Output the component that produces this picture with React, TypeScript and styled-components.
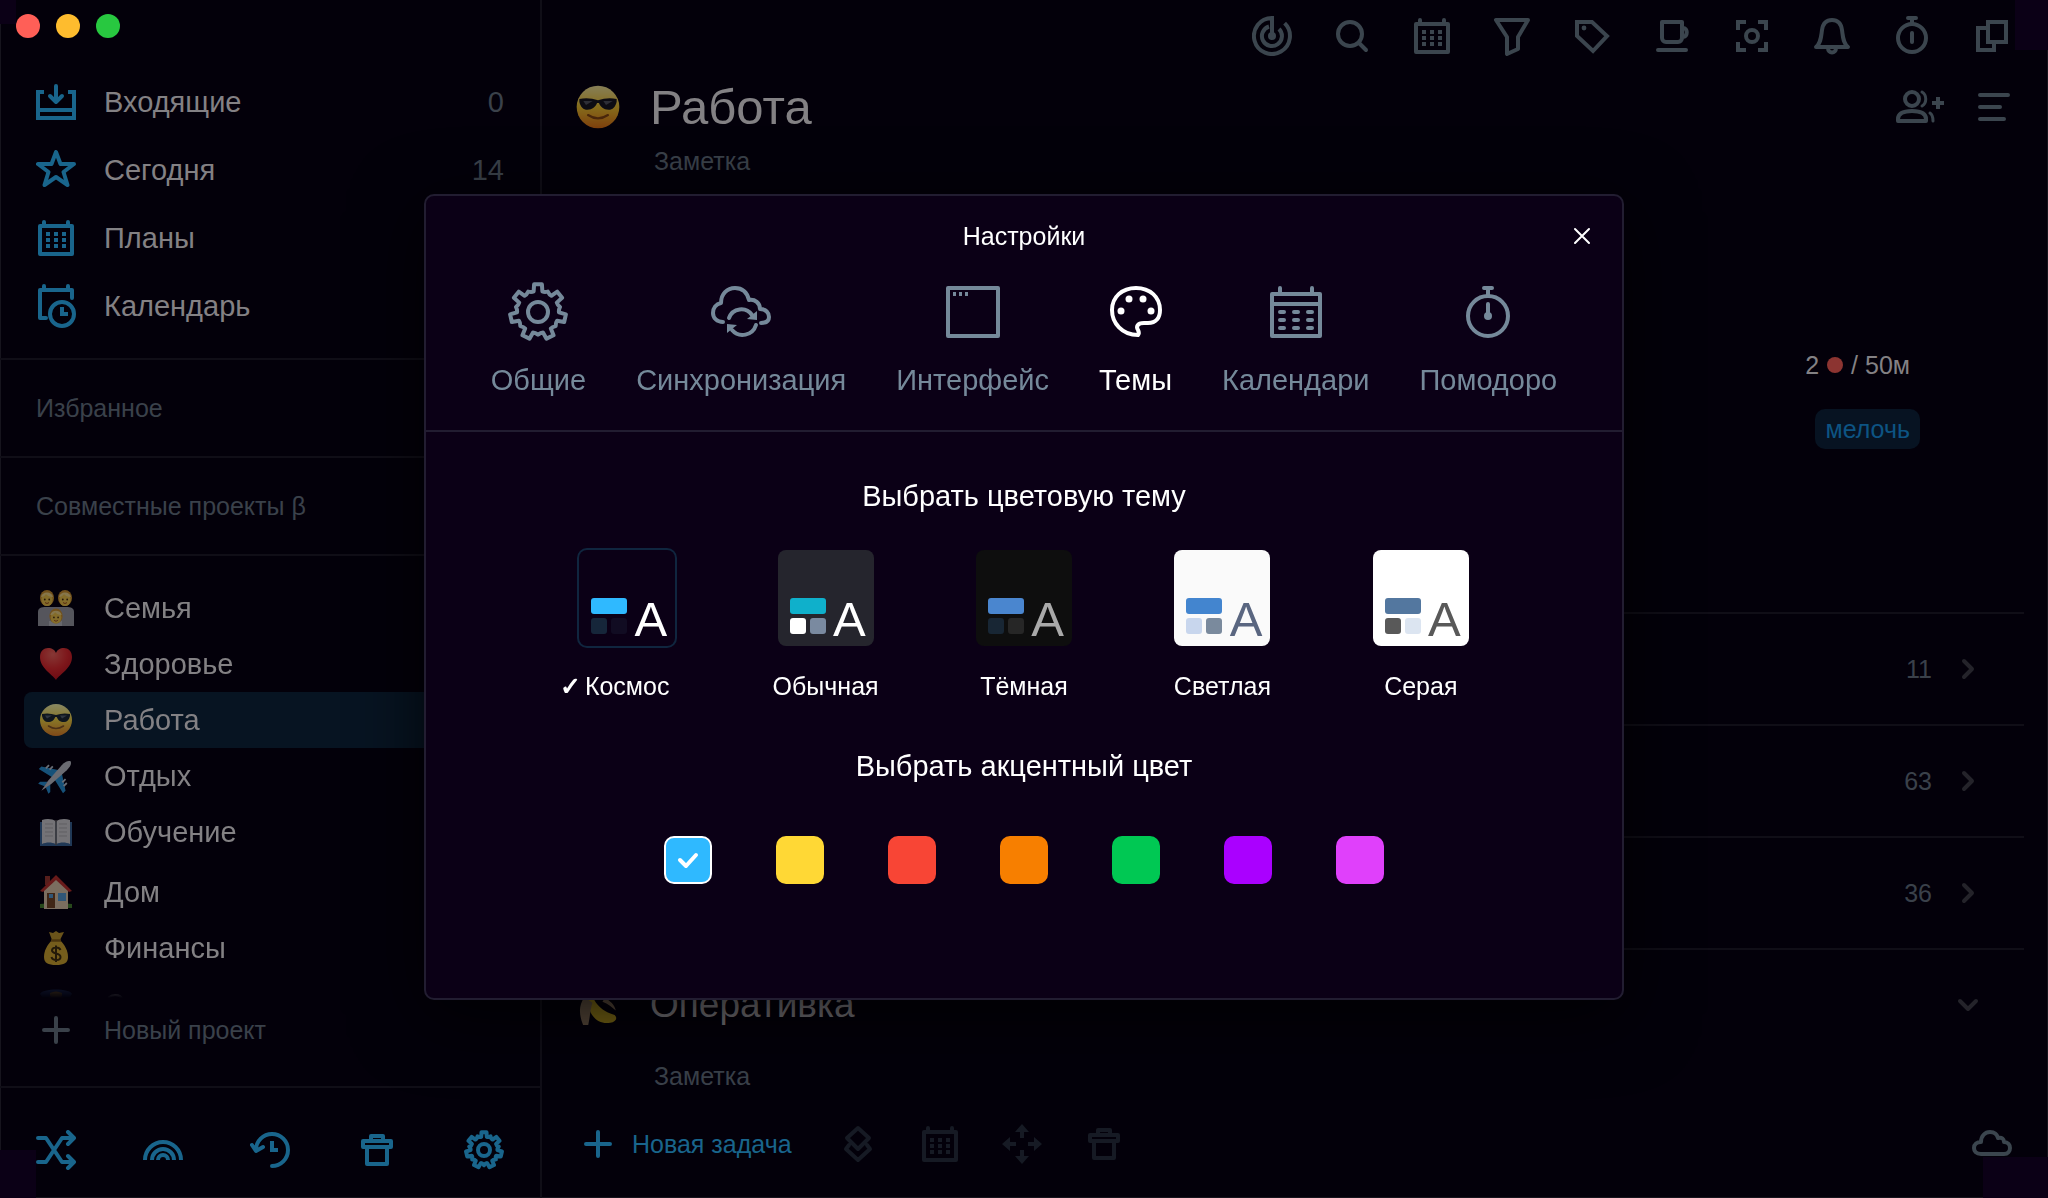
import React, { useState } from "react";
import styled, { createGlobalStyle } from "styled-components";

const color = {
  desktop: "#0b0016",
  page: "#03000a",
  modal: "#0b0016",
  edge: "#16141d",
  rule: "#100e17",
  text: "#838184",
  muted: "#3a414a",
  icon: "#3b454e",
  faint: "#161a24",
  accentDim: "#19658c",
  tab: "#75899a",
  modalRule: "#221d31",
};

const GlobalStyle = createGlobalStyle`
  *, *::before, *::after { box-sizing: border-box; }
  body {
    margin: 0;
    background: ${color.desktop};
    font-family: "Liberation Sans", Arial, sans-serif;
    font-size: 25px;
    line-height: 32px;
    color: ${color.text};
  }
  button { font: inherit; color: inherit; background: none; border: 0; padding: 0; cursor: pointer; }
  h1, h2, h3, p, ul { margin: 0; padding: 0; font-weight: 400; list-style: none; }
  svg { display: block; flex: none; }
`;

/* ---------- icons ---------- */

type IconProps = { size?: number };

const StrokeSvg = styled.svg`
  fill: none;
  stroke: currentColor;
  stroke-width: 4;
  stroke-linecap: round;
  stroke-linejoin: round;
  .solid { fill: currentColor; stroke: none; }
  .square { stroke-linecap: butt; stroke-linejoin: miter; }
  .thin { stroke-width: 3; }
  .hair { stroke-width: 2; }
`;

const Icon = ({ size = 40, children, box = "0 0 40 40", width }: any) => (
  <StrokeSvg width={width ?? size} height={size} viewBox={box} aria-hidden="true">
    {children}
  </StrokeSvg>
);

const gearPath = (c: number, outer: number, inner: number, teeth = 7) => {
  const step = 360 / teeth;
  const at = (r: number, deg: number) => {
    const a = ((deg - 90) * Math.PI) / 180;
    return `${(c + r * Math.cos(a)).toFixed(2)} ${(c + r * Math.sin(a)).toFixed(2)}`;
  };
  let d = "";
  for (let i = 0; i < teeth; i++) {
    const m = i * step;
    d += `${i ? "L" : "M"}${at(inner, m - 12)}L${at(outer, m - 8)}L${at(outer, m + 8)}L${at(inner, m + 12)}`;
    d += `Q${at(inner - 0.4, m + 18)} ${at(inner + 1.6, m + step / 2)}`;
    d += `Q${at(inner - 0.4, m + step - 18)} ${at(inner, m + step - 12)}`;
  }
  return d + "Z";
};

const InboxIcon = () => (
  <Icon><path className="square" d="M8 10H2V36H38V10H32M2 28H38" /><path d="M20 4V20M14 14L20 20L26 14" /></Icon>
);
const StarIcon = () => (
  <Icon><path d="M20 2L24.5 14H38L27.5 22L31.5 35L20 27L8.5 35L12.5 22L2 14H15.5Z" /></Icon>
);
const CalendarIcon = () => (
  <Icon>
    <path d="M4 8H36V36H4ZM8 4V8M32 4V8" />
    {[14, 20, 26].map((y) => [10, 18, 26].map((x) => <rect key={`${x}-${y}`} className="solid" x={x} y={y} width="4" height="4" />))}
  </Icon>
);
const CalendarClockIcon = () => (
  <Icon size={44} width={40} box="0 -2 40 44">
    <path d="M10 32H4V4H36V12M8 0V4M32 0V4" /><circle cx="26" cy="28" r="12" /><path className="square" d="M26 21V28H32" />
  </Icon>
);
const ShuffleIcon = () => (
  <Icon><path d="M2 8H10L26 32H37M2 32H10L26 8H37M32 2L38 8L32 14M32 26L38 32L32 38" /></Icon>
);
const RainbowIcon = () => (
  <Icon>
    <path className="square" d="M2 30A18 18 0 0 1 38 30M9 30A11 11 0 0 1 31 30" />
    <path className="square" d="M15 30A5 5 0 0 1 25 30" />
  </Icon>
);
const HistoryIcon = () => (
  <Icon><path d="M22 36A16 16 0 1 0 6 20M2 15L6 21L13 17" /><path className="square" d="M22 11V20H28" /></Icon>
);
const TrashIcon = () => (
  <Icon><path d="M6 11H34V17H6ZM10 17V34H30V17M14 11V6H26V11" /></Icon>
);
const GearIcon = () => (
  <Icon><path d={gearPath(20, 18, 13.5)} /><circle cx="20" cy="20" r="6" /></Icon>
);
const PlusIcon = () => <Icon><path d="M20 8V32M8 20H32" /></Icon>;
const RadarIcon = () => (
  <Icon>
    <path className="square" d="M20 20V2A18 18 0 1 0 32.6 7.2M17 10.5A10 10 0 1 0 27 13" /><circle className="solid" cx="20" cy="20" r="4" />
  </Icon>
);
const SearchIcon = () => <Icon><circle cx="18" cy="18" r="12" /><path d="M27 27L34 34" /></Icon>;
const FilterIcon = () => <Icon><path d="M4 4H36L26 21V33L15 38V21Z" /></Icon>;
const TagIcon = () => (
  <Icon><path className="square" d="M5 6H20L35 20L21 35L5 20Z" /><circle className="solid" cx="12" cy="12" r="2.4" /></Icon>
);
const CupIcon = () => (
  <Icon><path d="M10 6H30V22A4 4 0 0 1 26 26H14A4 4 0 0 1 10 22ZM31 12C36 12 36 20 31 21M6 34H34" /></Icon>
);
const FocusIcon = () => (
  <Icon><path className="square" d="M6 14V6H14M26 6H34V14M34 26V34H26M14 34H6V26" /><circle cx="20" cy="20" r="6" /></Icon>
);
const BellIcon = () => (
  <Icon><path d="M4 31C9 27 9 21 10 14C11 7 15 4 20 4C25 4 29 7 30 14C31 21 31 27 36 31ZM16 32C16 38 24 38 24 32" /></Icon>
);
const TimerIcon = () => (
  <Icon><circle cx="20" cy="22" r="14" /><path d="M16 2H24M20 2V8" /><path d="M20 17V26" /></Icon>
);
const CopyIcon = () => (
  <Icon><path className="square" d="M16 6H34V26H16ZM16 12H6V34H22V26" /></Icon>
);
const AddPeopleIcon = () => (
  <Icon width={48} box="0 0 48 40">
    <circle cx="16" cy="12" r="7" />
    <path d="M2 34V32C2 26 8 24 16 24S30 26 30 32V34Z" />
    <path className="thin" d="M26 5C31 8 31 16 26 19M34 26C37 28 37 31 37 34" />
    <path className="square" d="M42 10V22M36 16H48" />
  </Icon>
);
const MenuIcon = () => <Icon><path d="M8 8H36M8 20H28M8 32H32" /></Icon>;
const CloudIcon = () => (
  <Icon><path d="M9 30C4 30 2 27 2 24C2 20 5 18 9 18C9 12 13 8 18 8C22 8 25 10 26 14C30 13 32 15 32 18C36 18 38 21 38 24C38 27 36 30 32 30Z" /></Icon>
);
const LayersIcon = () => (
  <Icon><path d="M20 4L31 14L20 25L9 14ZM11 21L8 25L20 36L32 25L29 21" /></Icon>
);
const MoveIcon = () => (
  <Icon>
    {[0, 90, 180, 270].map((a) => (
      <path key={a} className="solid" transform={`rotate(${a} 20 20)`} d="M20 0L27 8H22V14H18V8H13Z" />
    ))}
  </Icon>
);
const ChevronIcon = ({ down }: { down?: boolean }) => (
  <Icon size={32} box="0 0 32 32"><path d={down ? "M8 12L16 20L24 12" : "M12 8L20 16L12 24"} /></Icon>
);
const CloseIcon = () => <Icon size={24} box="0 0 24 24"><path className="hair" d="M5 5L19 19M19 5L5 19" /></Icon>;

const BigIcon = ({ children }: any) => <Icon size={60} box="0 0 60 60">{children}</Icon>;
const BigGear = () => <BigIcon><path d={gearPath(30, 28, 21)} /><circle cx="30" cy="30" r="10" /></BigIcon>;
const BigSync = () => (
  <BigIcon>
    <path d="M12 40C6 40 2 36 2 31C2 26 5 22 10 21C10 12 16 6 24 6C31 6 36 10 38 18C44 17 49 21 49 27C55 27 58 31 58 35C58 39 55 41 50 41" />
    <path d="M18 36A13 13 0 0 1 41 33M45 43A14 14 0 0 1 21 48" />
    <path className="solid" d="M46 29V38L36 37ZM16 51V42L26 43Z" />
  </BigIcon>
);
const BigWindow = () => (
  <BigIcon><path d="M5 6H55V54H5Z" /><path className="solid" d="M10 10h3v4h-3zM16 10h3v4h-3zM22 10h3v4h-3z" /></BigIcon>
);
const BigPalette = () => (
  <BigIcon>
    <path d="M32 53C16 53 6 41 6 28C6 15 16 6 30 6C44 6 54 15 54 28C54 36 50 41 42 41H38C31 41 30 45 32 48C33 50 33 52 32 53Z" />
    <g className="solid"><circle cx="23" cy="17" r="3.5" /><circle cx="37" cy="17" r="3.5" /><circle cx="15" cy="29" r="3.5" /><circle cx="45" cy="29" r="3.5" /></g>
  </BigIcon>
);
const BigCalendar = () => (
  <BigIcon>
    <path d="M6 12H54V54H6ZM6 22H54M14 6V12M46 6V12" />
    {[28, 36, 44].map((y) => [12, 26, 40].map((x) => <rect key={`${x}-${y}`} className="solid" x={x} y={y} width="8" height="4" rx="2" />))}
  </BigIcon>
);
const BigTimer = () => (
  <BigIcon><circle cx="30" cy="34" r="20" /><path d="M26 6H34M30 6V13M30 22V34" /><circle className="solid" cx="30" cy="34" r="4" /></BigIcon>
);

/* ---------- project pictures ---------- */

const Picture = styled.svg`opacity: 0.52;`;
const Emoji = ({ size = 36, children }: any) => (
  <Picture width={size} height={size} viewBox="0 0 36 36" aria-hidden="true">{children}</Picture>
);
const Head = ({ x, y, s = 1 }: { x: number; y: number; s?: number }) => (
  <g transform={`translate(${x} ${y}) scale(${s})`}>
    <ellipse cx="0" cy="0" rx="7" ry="8" fill="#d99a2b" />
    <ellipse cx="0" cy="1.6" rx="5.6" ry="6.4" fill="#fbd04a" />
    <path d="M-6-1C-5-7 5-7 6-1C2-1 0-3-1-4C-2-2-4-1-6-1Z" fill="#ffe38a" />
    <circle cx="-2.2" cy="1.5" r=".9" fill="#4a2d0a" /><circle cx="2.2" cy="1.5" r=".9" fill="#4a2d0a" />
    <path d="M-2 4.6Q0 6.4 2 4.6" fill="none" stroke="#a5501a" />
  </g>
);
const Family = () => (
  <Emoji>
    <path d="M0 36V22C0 18 3 17 8 17H28C33 17 36 18 36 22V36Z" fill="#a2a4a9" />
    <path d="M11 36V31H24V36Z" fill="#c4c5c9" />
    <Head x={9} y={8} /><Head x={27} y={8} /><Head x={18} y={26} s={0.95} />
  </Emoji>
);
const Heart = () => (
  <Emoji>
    <defs><radialGradient id="heart" cx=".4" cy=".2" r=".9"><stop offset="0" stopColor="#ff6b5e" /><stop offset=".5" stopColor="#ef2d2d" /><stop offset="1" stopColor="#c3101a" /></radialGradient></defs>
    <path fill="url(#heart)" d="M18 34C14 28 2 22 2 11C2 5 6 2 10 2C14 2 17 4 18 7C19 4 22 2 26 2C30 2 34 5 34 11C34 22 22 28 18 34Z" />
  </Emoji>
);
const Cool = ({ size }: IconProps) => (
  <Emoji size={size}>
    <defs><linearGradient id="cool" x2="0" y2="1"><stop offset="0" stopColor="#fff3a0" /><stop offset=".5" stopColor="#fdd02c" /><stop offset="1" stopColor="#ee7a10" /></linearGradient></defs>
    <circle cx="18" cy="18" r="16" fill="url(#cool)" />
    <path d="M4 12Q11 10.500 18 13Q25 10.500 32 12V14C31 18 29 20 26 20C22 20 20 18 18.700 15H17.300C16 18 14 20 10 20C7 20 5 18 4 14Z" fill="#17181c" />
    <path d="M7 13.500H14L9 16.500ZM22 13.500H29L24 16.500Z" fill="#55585f" />
    <path d="M10.500 24Q18 29 25.500 24" fill="none" stroke="#8a4a0c" strokeWidth="1.600" strokeLinecap="round" />
  </Emoji>
);
const Plane = () => (
  <Emoji>
    <g transform="translate(18 18) rotate(45) scale(.9) translate(-18 -18)">
      <path d="M16 11L-1 22V26L16 22ZM20 11L37 22V26L20 22ZM16 29L10 35V38L17 35ZM20 29L26 35V38L19 35Z" fill="#2a9be0" />
      <path d="M4 15v5M8 13v5M28 13v5M32 15v5" stroke="#c9d3dc" strokeWidth="2" />
      <path d="M18-5C21-4 22 0 22 5L20.500 28L18 41L15.500 28L14 5C14 0 15-4 18-5Z" fill="#c9cdd3" />
    </g>
  </Emoji>
);
const Book = () => (
  <Emoji>
    <path d="M2 8H34V32H2Z" fill="#3c6c9e" />
    <path d="M4 6C9 4 15 5 17.500 7V30C14 28 8 28 4 30ZM32 6C27 4 21 5 18.500 7V30C22 28 28 28 32 30Z" fill="#dcdcdc" />
    <path d="M7 10h8M7 14h8M7 18h8M7 22h8M21 10h8M21 14h8M21 18h8M21 22h8" stroke="#b5b5b5" />
    <path d="M18 6V31" stroke="#666" strokeWidth="1.500" />
  </Emoji>
);
const House = () => (
  <Emoji>
    <path d="M7 2H12V11H7Z" fill="#a33a2e" /><path d="M2 30Q18 28 34 30V34H2Z" fill="#4a8a2c" />
    <path d="M6 15L18 3L30 15V35H6Z" fill="#ead3b0" />
    <path d="M2 17L18 1L34 17L31 18L18 6L5 18Z" fill="#c5322b" />
    <path d="M9 19H17V34H9Z" fill="#7a4a24" /><path d="M20 19H28V27H20ZM11 20H15V24H11Z" fill="#5aa5dd" />
  </Emoji>
);
const Money = () => (
  <Emoji>
    <path d="M11 2L15 3L18 1L21 3L26 2L22 10H14Z" fill="#c9a02b" />
    <path d="M14 10H22C27 15 30 21 30 27C30 33 26 35 18 35S6 33 6 27C6 21 9 15 14 10Z" fill="#dfb22f" />
    <path d="M13 10.500H23" stroke="#8c6413" strokeWidth="2.500" />
    <path d="M22.500 20C21 16.500 14 17 14 20.500C14 24.500 22.500 22.500 22.500 27C22.500 31 14.500 31 13.500 27M18 15.500V32" fill="none" stroke="#41300a" strokeWidth="2" />
  </Emoji>
);
const Officer = () => (
  <Emoji>
    <path d="M2 8C4 2 32 2 34 8L30 14H6Z" fill="#2c4d8c" /><path d="M12 7Q18 4 24 7V10H12Z" fill="#d9aa3a" />
    <circle cx="18" cy="20" r="11" fill="#fbd04a" />
  </Emoji>
);
const Banana = () => (
  <Emoji size={40}>
    <path d="M9 3C14 10 15 22 33 27C36 30 34 33 29 34C17 36 9 26 9 14Z" fill="#e8c520" />
    <path d="M6 11C0 18 1 28 5 37H9C11 28 11 22 13 16Z" fill="#a98f6a" />
    <path d="M24 12C29 14 33 18 34 23C31 20 27 17 22 15Z" fill="#a98f6a" />
  </Emoji>
);

/* ---------- window ---------- */

const Window = styled.div`
  position: relative;
  display: grid;
  grid-template-columns: 542px 1fr;
  height: 100vh;
  min-height: 1100px;
  overflow: hidden;
  background: ${color.page};
  box-shadow: inset 1px -1px 0 ${color.edge}, inset -1px 0 0 ${color.edge};
`;

type CornerProps = { $v: "top" | "bottom"; $h: "left" | "right"; $w: number; $t: number };
const Corner = styled.span<CornerProps>`
  position: absolute;
  ${(p) => p.$v}: 0;
  ${(p) => p.$h}: 0;
  width: ${(p) => p.$w}px;
  height: ${(p) => p.$t}px;
  background: ${color.desktop};
`;

const Sidebar = styled.aside`
  display: flex;
  flex-direction: column;
  min-height: 0;
  border-right: 2px solid ${color.rule};
`;
const Lights = styled.div`
  position: relative;
  z-index: 1;
  display: flex;
  gap: 16px;
  padding: 14px 16px 0;
`;
const Light = styled.button<{ $fill: string }>`
  width: 24px;
  height: 24px;
  border-radius: 50%;
  background: ${(p) => p.$fill};
`;
const MainNav = styled.nav`
  padding: 30px 0 18px;
`;
const NavItem = styled.button`
  display: flex;
  align-items: center;
  gap: 28px;
  width: 100%;
  height: 68px;
  padding: 0 36px;
  font-size: 29px;
  text-align: left;
  svg { color: ${color.accentDim}; }
`;
const NavCount = styled.span`
  margin-left: auto;
  color: ${color.muted};
`;
const Section = styled.h2`
  display: flex;
  align-items: center;
  flex: none;
  height: 98px;
  padding: 0 36px;
  border-top: 2px solid ${color.rule};
  font-size: 25px;
  color: ${color.muted};
`;
const Projects = styled.ul`
  flex: 1;
  min-height: 0;
  overflow: hidden;
  padding: 24px 16px 0 24px;
  border-top: 2px solid ${color.rule};
  mask-image: linear-gradient(to bottom, #000 calc(100% - 24px), transparent);
`;
const ProjectGroup = styled.li`
  & + & { margin-top: 4px; }
`;
const Project = styled.button<{ $active?: boolean }>`
  display: flex;
  align-items: center;
  gap: 30px;
  width: 100%;
  height: 56px;
  padding: 0 14px;
  border-radius: 8px;
  font-size: 29px;
  text-align: left;
  background: ${(p) => (p.$active ? "#071422" : "transparent")};
`;
const NewProject = styled.button`
  display: flex;
  align-items: center;
  gap: 28px;
  flex: none;
  height: 88px;
  padding: 0 36px 24px;
  color: ${color.muted};
`;
const SideTools = styled.div`
  display: flex;
  align-items: center;
  justify-content: space-between;
  flex: none;
  height: 112px;
  padding: 14px 36px 0;
  border-top: 2px solid ${color.rule};
  color: ${color.accentDim};
`;

const Main = styled.main`
  display: flex;
  flex-direction: column;
  min-width: 0;
`;
const Toolbar = styled.div`
  display: flex;
  justify-content: flex-end;
  gap: 40px;
  padding: 16px 36px 0;
  color: ${color.icon};
`;
const PageHead = styled.header`
  display: flex;
  align-items: center;
  gap: 28px;
  height: 56px;
  margin-top: 23px;
  padding: 0 36px 0 32px;
`;
const PageTitle = styled.h1`
  flex: 1;
  font-size: 49px;
  line-height: 56px;
`;
const HeadActions = styled.div`
  display: flex;
  gap: 28px;
  color: ${color.icon};
`;
const Note = styled.p<{ $top?: number }>`
  padding: ${(p) => p.$top ?? 0}px 112px 0;
  color: ${color.muted};
`;
const TaskMeta = styled.div`
  display: flex;
  flex-direction: column;
  align-items: flex-end;
  gap: 28px;
  height: 435px;
  padding: 172px 128px 0 0;
`;
const Pomodoros = styled.p`
  display: flex;
  align-items: center;
  gap: 8px;
  padding-right: 10px;
`;
const Dot = styled.i`
  width: 16px;
  height: 16px;
  border-radius: 50%;
  background: #8c3431;
`;
const Tag = styled.span`
  height: 40px;
  padding: 4px 10px;
  border-radius: 10px;
  background: #071322;
  color: #0d5483;
`;
const GroupRow = styled.section`
  display: flex;
  align-items: center;
  justify-content: flex-end;
  gap: 20px;
  height: 112px;
  margin: 0 24px 0 36px;
  padding-right: 40px;
  border-top: 2px solid ${color.rule};
  color: ${color.muted};
`;
const GroupTitle = styled.h3`
  display: flex;
  align-items: center;
  gap: 32px;
  flex: 1;
  font-size: 37px;
  line-height: 40px;
  color: #77757a;
`;
const GroupButton = styled.button`
  color: #24232a;
`;
const TaskBar = styled.footer`
  display: flex;
  align-items: center;
  gap: 42px;
  margin-top: auto;
  padding: 0 36px 34px;
  color: ${color.faint};
`;
const NewTask = styled.button`
  display: flex;
  align-items: center;
  gap: 14px;
  padding-right: 4px;
  color: ${color.accentDim};
`;
const SyncButton = styled.button`
  margin-left: auto;
  color: ${color.icon};
`;

/* ---------- settings dialog ---------- */

const Backdrop = styled.div`
  position: fixed;
  inset: 0;
  display: flex;
  align-items: center;
  justify-content: center;
  padding-bottom: 4px;
`;
const Dialog = styled.div`
  position: relative;
  width: 1200px;
  max-width: 100%;
  padding-bottom: 114px;
  border: 2px solid ${color.modalRule};
  border-radius: 10px;
  background: ${color.modal};
  box-shadow: 0 16px 70px rgba(0, 0, 0, 0.75);
  color: #fff;
  text-align: center;
`;
const DialogHead = styled.header`
  display: grid;
  grid-template-columns: 1fr auto 1fr;
  align-items: center;
  height: 80px;
  padding: 0 28px;
`;
const DialogTitle = styled.h2`
  grid-column: 2;
  font-size: 25px;
`;
const CloseButton = styled.button`
  justify-self: end;
`;
const Tabs = styled.div`
  display: flex;
  justify-content: center;
  gap: 50px;
  height: 156px;
  padding-top: 6px;
  border-bottom: 2px solid ${color.modalRule};
`;
const Tab = styled.button<{ $active: boolean }>`
  display: flex;
  flex-direction: column;
  align-items: center;
  gap: 22px;
  align-self: flex-start;
  font-size: 29px;
  color: ${(p) => (p.$active ? "#fff" : color.tab)};
`;
const Choice = styled.fieldset`
  margin: 0;
  padding: 0;
  border: 0;
`;
const ChoiceTitle = styled.legend`
  width: 100%;
  padding: 48px 0 0;
  font-size: 29px;
`;
const HiddenRadio = styled.input`
  position: absolute;
  inset: 0;
  width: 100%;
  height: 100%;
  margin: 0;
  opacity: 0;
  cursor: pointer;
`;
const Themes = styled.div`
  display: grid;
  grid-template-columns: repeat(5, 1fr);
  max-width: 992px;
  margin: 0 auto;
  padding-top: 38px;
`;
const ThemeOption = styled.label`
  position: relative;
  display: flex;
  flex-direction: column;
  align-items: center;
  gap: 24px;
`;
const Preview = styled.span<{ $bg: string; $ink: string; $active: boolean }>`
  display: flex;
  align-items: flex-end;
  justify-content: space-between;
  width: 96px;
  height: 96px;
  padding: 0 8px 10px 12px;
  border-radius: 8px;
  background: ${(p) => p.$bg};
  box-shadow: ${(p) => (p.$active ? "0 0 0 2px #10263f" : "none")};
  color: ${(p) => p.$ink};
  font-size: 49px;
  line-height: 34px;
`;
const Blocks = styled.span`
  display: grid;
  grid-template-columns: 16px 16px;
  grid-template-rows: 16px 16px;
  gap: 4px;
  margin-bottom: 2px;
`;
const Block = styled.i<{ $fill: string; $wide?: boolean }>`
  grid-column: ${(p) => (p.$wide ? "span 2" : "auto")};
  border-radius: 3px;
  background: ${(p) => p.$fill};
`;
const ThemeName = styled.span`
  position: relative;
`;
const Mark = styled.span`
  position: absolute;
  right: 100%;
  padding-right: 4px;
  font-weight: 700;
`;
const Accents = styled.div`
  display: flex;
  justify-content: center;
  gap: 64px;
  padding-top: 54px;
`;
const Swatch = styled.label<{ $fill: string; $active: boolean }>`
  position: relative;
  display: grid;
  place-items: center;
  width: 48px;
  height: 48px;
  border: ${(p) => (p.$active ? "2px solid #fff" : "0")};
  border-radius: 10px;
  background: ${(p) => p.$fill};
`;

const nav = [
  { label: "Входящие", icon: <InboxIcon />, count: "0" },
  { label: "Сегодня", icon: <StarIcon />, count: "14" },
  { label: "Планы", icon: <CalendarIcon /> },
  { label: "Календарь", icon: <CalendarClockIcon /> },
];
const projects = [
  [
    { label: "Семья", icon: <Family /> },
    { label: "Здоровье", icon: <Heart /> },
    { label: "Работа", icon: <Cool />, active: true },
    { label: "Отдых", icon: <Plane /> },
    { label: "Обучение", icon: <Book /> },
  ],
  [
    { label: "Дом", icon: <House /> },
    { label: "Финансы", icon: <Money /> },
    { label: "Спорт", icon: <Officer /> },
  ],
];
const sideTools = [
  ["Случайная задача", <ShuffleIcon />],
  ["Радуга", <RainbowIcon />],
  ["История", <HistoryIcon />],
  ["Корзина", <TrashIcon />],
  ["Настройки", <GearIcon />],
] as const;
const tools = [
  ["Радар", <RadarIcon />],
  ["Поиск", <SearchIcon />],
  ["Календарь", <CalendarIcon />],
  ["Фильтр", <FilterIcon />],
  ["Метки", <TagIcon />],
  ["Перерыв", <CupIcon />],
  ["Фокус", <FocusIcon />],
  ["Уведомления", <BellIcon />],
  ["Таймер", <TimerIcon />],
  ["Новое окно", <CopyIcon />],
] as const;
const taskTools = [
  ["Слои", <LayersIcon />],
  ["Дата", <CalendarIcon />],
  ["Переместить", <MoveIcon />],
  ["Удалить", <TrashIcon />],
] as const;
const tabs = [
  ["Общие", <BigGear />],
  ["Синхронизация", <BigSync />],
  ["Интерфейс", <BigWindow />],
  ["Темы", <BigPalette />],
  ["Календари", <BigCalendar />],
  ["Помодоро", <BigTimer />],
] as const;
const themes = [
  { name: "Космос", bg: "#0b0016", bar: "#2fb9ff", a: "#16263a", b: "#110c22", ink: "#fff" },
  { name: "Обычная", bg: "#25252d", bar: "#0fb0cb", a: "#fff", b: "#7a8aa0", ink: "#fff" },
  { name: "Тёмная", bg: "#0e0e0e", bar: "#4a86cf", a: "#182634", b: "#262626", ink: "#a9a9a9" },
  { name: "Светлая", bg: "#fafafa", bar: "#4385cf", a: "#c8d6ed", b: "#7a8a9d", ink: "#5a6680" },
  { name: "Серая", bg: "#fff", bar: "#53779f", a: "#595959", b: "#dce5f1", ink: "#595959" },
];
const accents = [
  ["Голубой", "#2fb9ff"],
  ["Жёлтый", "#ffd835"],
  ["Красный", "#f84535"],
  ["Оранжевый", "#f77f00"],
  ["Зелёный", "#00c853"],
  ["Фиолетовый", "#aa00ff"],
  ["Розовый", "#e040fb"],
] as const;

const Settings = () => {
  const [tab, setTab] = useState("Темы");
  const [theme, setTheme] = useState("Космос");
  const [accent, setAccent] = useState("Голубой");
  return (
    <Backdrop>
      <Dialog role="dialog" aria-labelledby="settings-title">
        <DialogHead>
          <DialogTitle id="settings-title">Настройки</DialogTitle>
          <CloseButton aria-label="Закрыть"><CloseIcon /></CloseButton>
        </DialogHead>
        <Tabs role="tablist">
          {tabs.map(([label, icon]) => (
            <Tab key={label} role="tab" aria-selected={tab === label} $active={tab === label} onClick={() => setTab(label)}>
              {icon}
              {label}
            </Tab>
          ))}
        </Tabs>
        <Choice>
          <ChoiceTitle>Выбрать цветовую тему</ChoiceTitle>
          <Themes>
            {themes.map((t) => (
              <ThemeOption key={t.name}>
                <HiddenRadio type="radio" name="theme" checked={theme === t.name} onChange={() => setTheme(t.name)} />
                <Preview $bg={t.bg} $ink={t.ink} $active={theme === t.name}>
                  <Blocks>
                    <Block $wide $fill={t.bar} />
                    <Block $fill={t.a} />
                    <Block $fill={t.b} />
                  </Blocks>
                  A
                </Preview>
                <ThemeName>
                  {theme === t.name && <Mark>✓</Mark>}
                  {t.name}
                </ThemeName>
              </ThemeOption>
            ))}
          </Themes>
        </Choice>
        <Choice>
          <ChoiceTitle>Выбрать акцентный цвет</ChoiceTitle>
          <Accents>
            {accents.map(([name, fill]) => (
              <Swatch key={name} $fill={fill} $active={accent === name}>
                <HiddenRadio type="radio" name="accent" aria-label={name} checked={accent === name} onChange={() => setAccent(name)} />
                {accent === name && <Icon size={24} box="0 0 24 24"><path d="M4 12L10 18L20 7" /></Icon>}
              </Swatch>
            ))}
          </Accents>
        </Choice>
      </Dialog>
    </Backdrop>
  );
};

export default function App() {
  return (
    <>
      <GlobalStyle />
      <Window>
        <Corner $v="top" $h="left" $w={16} $t={24} />
        <Corner $v="top" $h="right" $w={33} $t={50} />
        <Corner $v="bottom" $h="left" $w={36} $t={48} />
        <Corner $v="bottom" $h="right" $w={65} $t={41} />
        <Sidebar>
          <Lights>
            <Light $fill="#ff5f57" aria-label="Закрыть окно" />
            <Light $fill="#febc2e" aria-label="Свернуть окно" />
            <Light $fill="#28c840" aria-label="Развернуть окно" />
          </Lights>
          <MainNav>
            {nav.map((n) => (
              <NavItem key={n.label}>
                {n.icon}
                {n.label}
                {n.count && <NavCount>{n.count}</NavCount>}
              </NavItem>
            ))}
          </MainNav>
          <Section>Избранное</Section>
          <Section>Совместные проекты β</Section>
          <Projects>
            {projects.map((group, i) => (
              <ProjectGroup key={i}>
                {group.map((p: any) => (
                  <Project key={p.label} $active={p.active}>
                    {p.icon}
                    {p.label}
                  </Project>
                ))}
              </ProjectGroup>
            ))}
          </Projects>
          <NewProject><PlusIcon />Новый проект</NewProject>
          <SideTools>
            {sideTools.map(([label, icon]) => <button key={label} aria-label={label}>{icon}</button>)}
          </SideTools>
        </Sidebar>
        <Main>
          <Toolbar>
            {tools.map(([label, icon]) => <button key={label} aria-label={label}>{icon}</button>)}
          </Toolbar>
          <PageHead>
            <Cool size={48} />
            <PageTitle>Работа</PageTitle>
            <HeadActions>
              <button aria-label="Добавить участника"><AddPeopleIcon /></button>
              <button aria-label="Меню проекта"><MenuIcon /></button>
            </HeadActions>
          </PageHead>
          <Note $top={10}>Заметка</Note>
          <TaskMeta>
            <Pomodoros>2 <Dot /> / 50м</Pomodoros>
            <Tag>мелочь</Tag>
          </TaskMeta>
          {["11", "63", "36"].map((count) => (
            <GroupRow key={count}>
              {count}
              <GroupButton aria-label="Развернуть раздел"><ChevronIcon /></GroupButton>
            </GroupRow>
          ))}
          <GroupRow>
            <GroupTitle><Banana />Оперативка</GroupTitle>
            <GroupButton aria-label="Свернуть раздел"><ChevronIcon down /></GroupButton>
          </GroupRow>
          <Note>Заметка</Note>
          <TaskBar>
            <NewTask><PlusIcon />Новая задача</NewTask>
            {taskTools.map(([label, icon]) => <button key={label} aria-label={label}>{icon}</button>)}
            <SyncButton aria-label="Синхронизация"><CloudIcon /></SyncButton>
          </TaskBar>
        </Main>
      </Window>
      <Settings />
    </>
  );
}
